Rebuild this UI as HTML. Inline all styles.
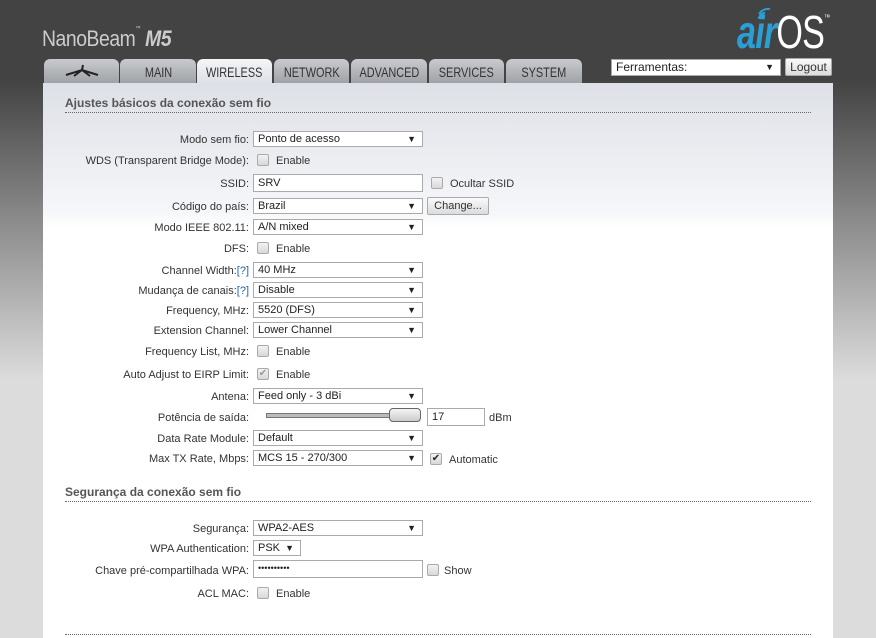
<!DOCTYPE html>
<html><head><meta charset="utf-8"><style>
*{box-sizing:border-box;margin:0;padding:0}
html,body{width:876px;height:638px;overflow:hidden}
body{font-family:"Liberation Sans",Arial,sans-serif;font-size:11px;color:#333;position:relative}
.bg{position:absolute;left:0;top:0;width:876px;height:638px;background:linear-gradient(#434343 0,#434343 80px,#dcdcdc 380px,#dcdcdc 100%)}
.a{position:absolute}
.tab{position:absolute;top:59px;height:24px;border-radius:6px 6px 0 0;background:linear-gradient(#c9cbce,#9fa2a6);
font-size:14px;color:#333;text-align:center;line-height:26px;overflow:hidden}
.tab span{display:inline-block;transform:scaleX(.78);white-space:nowrap}
.tab.on{background:linear-gradient(#f4f5f7,#dde0e5);height:25px}
.panel{position:absolute;left:43px;top:83px;width:790px;height:560px;background:linear-gradient(#dde0e6 0,#f6f7fa 130px,#fff 145px)}
.h{position:absolute;left:65px;font-size:12px;font-weight:bold;color:#555;width:746px;border-bottom:1px dotted #666;padding-bottom:2px}
.l{position:absolute;left:0;width:249px;text-align:right;font-size:11px;color:#333;line-height:14px}
.s,.i{position:absolute;height:16px;border:1px solid #aaa;background:#fff;font-size:11px;line-height:15px;padding-left:4px;color:#222}
.s:after{content:"▼";position:absolute;right:6px;top:0;font-size:9px}
.cb{position:absolute;width:12px;height:12px;border:1px solid #aaa;border-radius:2px;background:linear-gradient(#f2f2f2,#d8d8d8)}
.t{position:absolute;font-size:11px;line-height:14px;color:#333}
.btn{position:absolute;height:18px;border:1px solid #aaa;border-radius:2px;background:linear-gradient(#fafafa,#dcdcdc);font-size:11px;line-height:16px;text-align:center;color:#333}
</style></head><body>
<div class="bg"></div>
<div class="a" style="left:42px;top:26px;font-size:22px;color:#ccc;letter-spacing:-0.5px;transform:scaleX(.88);transform-origin:0 0;white-space:nowrap">NanoBeam<span style="font-size:6px;vertical-align:top">™</span> <i style="font-weight:bold">M5</i></div>
<div class="a" style="left:737px;top:5px;font-size:46px;color:#fff;transform:scaleX(.74);transform-origin:0 0;white-space:nowrap;letter-spacing:-1px"><i style="color:#2a9fd6;font-weight:bold">air</i>OS<span style="font-size:8px;vertical-align:top;position:relative;top:8px">™</span></div>
<svg class="a" style="left:757px;top:7px" width="16" height="14"><path d="M2 12a6 6 0 0 1 6-6M2 7a11 11 0 0 1 11-5" stroke="#2a9fd6" stroke-width="2" fill="none"/></svg>
<div class="tab" style="left:44px;width:75px"><svg width="40" height="20" style="margin-top:3px"><path d="M4 13 L20 8 L36 13 M12 14 L20 8 L28 14 M20 8 L21 3" stroke="#222" stroke-width="2" fill="none"/></svg></div>
<div class="tab" style="left:120px;width:76px"><span>MAIN</span></div>
<div class="tab on" style="left:197px;width:75px"><span>WIRELESS</span></div>
<div class="tab" style="left:274px;width:75px"><span>NETWORK</span></div>
<div class="tab" style="left:351px;width:76px"><span>ADVANCED</span></div>
<div class="tab" style="left:429px;width:75px"><span>SERVICES</span></div>
<div class="tab" style="left:506px;width:76px"><span>SYSTEM</span></div>
<div class="s" style="left:611px;top:59px;width:170px;height:17px;font-size:12px">Ferramentas:</div>
<div class="btn" style="left:785px;top:58px;width:47px;font-size:12px">Logout</div>
<div class="panel"></div>
<div class="h" style="top:96px">Ajustes básicos da conexão sem fio</div>

<div class="l" style="top:133px">Modo sem fio:</div><div class="s" style="left:253px;top:131px;width:170px">Ponto de acesso</div>
<div class="l" style="top:154px">WDS (Transparent Bridge Mode):</div><div class="cb" style="left:257px;top:154px"></div><div class="t" style="left:276px;top:154px">Enable</div>
<div class="l" style="top:177px">SSID:</div><div class="i" style="left:253px;top:174px;width:170px;height:18px;line-height:16px">SRV</div><div class="cb" style="left:431px;top:177px"></div><div class="t" style="left:450px;top:177px">Ocultar SSID</div>
<div class="l" style="top:200px">Código do país:</div><div class="s" style="left:253px;top:198px;width:170px">Brazil</div><div class="btn" style="left:427px;top:197px;width:62px">Change...</div>
<div class="l" style="top:221px">Modo IEEE 802.11:</div><div class="s" style="left:253px;top:219px;width:170px">A/N mixed</div>
<div class="l" style="top:242px">DFS:</div><div class="cb" style="left:257px;top:242px"></div><div class="t" style="left:276px;top:242px">Enable</div>
<div class="l" style="top:264px">Channel Width:<span style="color:#2266aa">[?]</span></div><div class="s" style="left:253px;top:262px;width:170px">40 MHz</div>
<div class="l" style="top:284px">Mudança de canais:<span style="color:#2266aa">[?]</span></div><div class="s" style="left:253px;top:282px;width:170px">Disable</div>
<div class="l" style="top:304px">Frequency, MHz:</div><div class="s" style="left:253px;top:302px;width:170px">5520 (DFS)</div>
<div class="l" style="top:324px">Extension Channel:</div><div class="s" style="left:253px;top:322px;width:170px">Lower Channel</div>
<div class="l" style="top:345px">Frequency List, MHz:</div><div class="cb" style="left:257px;top:345px"></div><div class="t" style="left:276px;top:345px">Enable</div>
<div class="l" style="top:368px">Auto Adjust to EIRP Limit:</div><div class="cb" style="left:257px;top:368px;color:#999;font-size:10px;line-height:10px;text-align:center">✔</div><div class="t" style="left:276px;top:368px">Enable</div>
<div class="l" style="top:390px">Antena:</div><div class="s" style="left:253px;top:388px;width:170px">Feed only - 3 dBi</div>
<div class="l" style="top:411px">Potência de saída:</div>
<div class="a" style="left:266px;top:413px;width:128px;height:5px;background:#bbb;border:1px solid #777"></div>
<div class="a" style="left:389px;top:408px;width:32px;height:14px;border:1px solid #666;border-radius:4px;background:linear-gradient(#f4f4f4,#ccc)"></div>
<div class="i" style="left:427px;top:408px;width:58px;height:18px;line-height:16px">17</div><div class="t" style="left:489px;top:411px">dBm</div>
<div class="l" style="top:432px">Data Rate Module:</div><div class="s" style="left:253px;top:430px;width:170px">Default</div>
<div class="l" style="top:452px">Max TX Rate, Mbps:</div><div class="s" style="left:253px;top:450px;width:170px">MCS 15 - 270/300</div><div class="cb" style="left:430px;top:453px;font-size:10px;line-height:10px;text-align:center;color:#222">✔</div><div class="t" style="left:449px;top:453px">Automatic</div>

<div class="h" style="top:485px">Segurança da conexão sem fio</div>
<div class="l" style="top:522px">Segurança:</div><div class="s" style="left:253px;top:520px;width:170px">WPA2-AES</div>
<div class="l" style="top:542px">WPA Authentication:</div><div class="s" style="left:253px;top:540px;width:48px">PSK</div>
<div class="l" style="top:564px">Chave pré-compartilhada WPA:</div><div class="i" style="left:253px;top:560px;width:170px;height:18px;line-height:14px;font-size:9px">••••••••••</div><div class="cb" style="left:427px;top:564px"></div><div class="t" style="left:444px;top:564px">Show</div>
<div class="l" style="top:587px">ACL MAC:</div><div class="cb" style="left:257px;top:587px"></div><div class="t" style="left:276px;top:587px">Enable</div>
<div class="a" style="left:65px;top:634px;width:746px;border-top:1px dotted #666"></div>
</body></html>
